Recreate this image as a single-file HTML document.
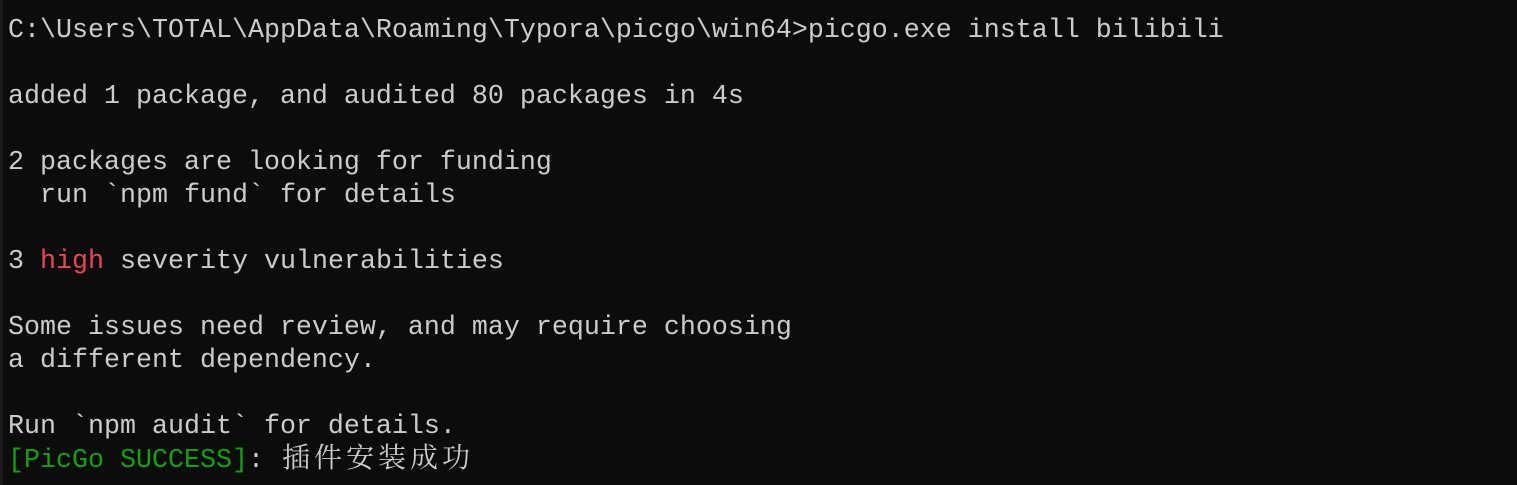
<!DOCTYPE html>
<html><head><meta charset="utf-8"><style>
html,body{margin:0;padding:0;background:#0c0c0c;width:1517px;height:485px;overflow:hidden}
pre{margin:0;position:absolute;left:8px;top:15px;font-family:"Liberation Mono",monospace;font-size:26.67px;line-height:33px;color:#cccccc;white-space:pre}
.r{color:#e74856}.g{color:#13a10e}
.c{display:inline-block;width:32px;text-align:center;font-family:"Noto Serif CJK SC","Noto Sans CJK SC",serif;font-size:28px;line-height:20px;vertical-align:baseline}
.edge{position:absolute;left:0;top:0;width:3px;height:485px;background:#1a1a1a}
.last{position:absolute;left:8px;top:445px;font-family:"Liberation Mono",monospace;font-size:26.67px;line-height:33px;color:#cccccc;white-space:pre}
</style></head><body><div class="edge"></div><pre>C:\Users\TOTAL\AppData\Roaming\Typora\picgo\win64>picgo.exe install bilibili

added 1 package, and audited 80 packages in 4s

2 packages are looking for funding
  run `npm fund` for details

3 <span class="r">high</span> severity vulnerabilities

Some issues need review, and may require choosing
a different dependency.

Run `npm audit` for details.</pre><div class="last"><span class="g">[PicGo SUCCESS]</span>: <span class="c">插</span><span class="c">件</span><span class="c">安</span><span class="c">装</span><span class="c">成</span><span class="c">功</span></div></body></html>
